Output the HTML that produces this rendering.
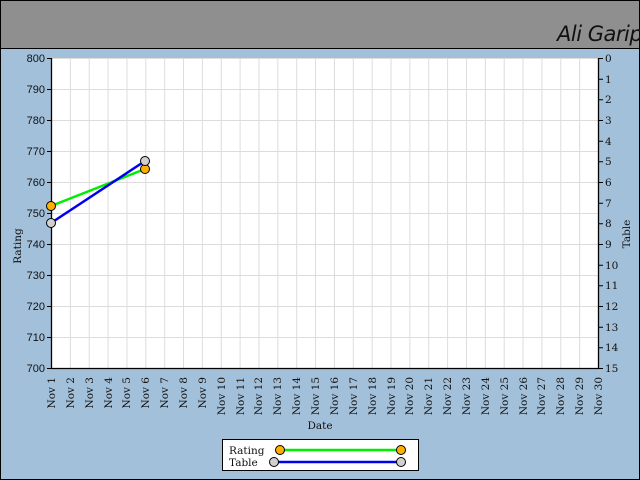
<!DOCTYPE html>
<html><head><meta charset="utf-8"><style>
html,body{margin:0;padding:0;width:640px;height:480px;overflow:hidden;background:#a3c0da}
svg{display:block}
.l{font-family:"Liberation Sans",sans-serif;font-size:11px;fill:#111}
.s{font-family:"DejaVu Serif","Liberation Serif",serif;font-size:10.5px;fill:#111}
</style></head><body>
<svg width="640" height="480" xmlns="http://www.w3.org/2000/svg">
<defs>
<pattern id="gv" x="51" y="0" width="18.862" height="10" patternUnits="userSpaceOnUse"><line x1="0.5" y1="0" x2="0.5" y2="10" stroke="#dcdcdc" stroke-width="1"/></pattern>
<pattern id="gh" x="0" y="58" width="10" height="31" patternUnits="userSpaceOnUse"><line x1="0" y1="0.5" x2="10" y2="0.5" stroke="#dcdcdc" stroke-width="1"/></pattern>
</defs>
<rect x="0.5" y="0.5" width="639" height="479" fill="#a3c0da" stroke="#000"/>
<rect x="0.5" y="0.5" width="639" height="48" fill="#8f8f8f" stroke="#000"/>
<text x="557" y="41" style="font-family:'DejaVu Sans',sans-serif;font-size:21px;font-style:italic;font-weight:200" fill="#111" letter-spacing="-0.5">Ali Garip</text>
<rect x="51" y="58" width="547" height="310" fill="#fff"/>
<rect x="51" y="58" width="547" height="310" fill="url(#gv)"/>
<rect x="51" y="58" width="547" height="310" fill="url(#gh)"/>
<path d="M51.5 58V368.5H598.5V58" fill="none" stroke="#000" stroke-width="1.3"/>
<g stroke="#000">
<path d="M47 58.5h4M47 89.5h4M47 120.5h4M47 151.5h4M47 182.5h4M47 213.5h4M47 244.5h4M47 275.5h4M47 306.5h4M47 337.5h4M47 368.5h4"/>
<path d="M598 58.5h5M598 79.2h5M598 99.8h5M598 120.5h5M598 141.2h5M598 161.8h5M598 182.5h5M598 203.2h5M598 223.8h5M598 244.5h5M598 265.2h5M598 285.8h5M598 306.5h5M598 327.2h5M598 347.8h5M598 368.5h5"/>
</g>
<g class="l" text-anchor="end">
<text x="45" y="62">800</text><text x="45" y="93">790</text><text x="45" y="124">780</text><text x="45" y="155">770</text><text x="45" y="186">760</text><text x="45" y="217">750</text><text x="45" y="248">740</text><text x="45" y="279">730</text><text x="45" y="310">720</text><text x="45" y="341">710</text><text x="45" y="372">700</text>
</g>
<g class="s">
<text x="605" y="62">0</text><text x="605" y="83">1</text><text x="605" y="103">2</text><text x="605" y="124">3</text><text x="605" y="145">4</text><text x="605" y="165">5</text><text x="605" y="186">6</text><text x="605" y="207">7</text><text x="605" y="227">8</text><text x="605" y="248">9</text><text x="605" y="269">10</text><text x="605" y="289">11</text><text x="605" y="310">12</text><text x="605" y="331">13</text><text x="605" y="351">14</text><text x="605" y="372">15</text>
</g>
<text class="s" transform="translate(21,246) rotate(-90)" text-anchor="middle">Rating</text>
<text class="s" transform="translate(630,234) rotate(-90)" text-anchor="middle">Table</text>
<text class="s" x="320" y="429" text-anchor="middle">Date</text>
<g class="s" text-anchor="end">
<text transform="translate(55,377) rotate(-90)">Nov 1</text>
<text transform="translate(74,377) rotate(-90)">Nov 2</text>
<text transform="translate(93,377) rotate(-90)">Nov 3</text>
<text transform="translate(112,377) rotate(-90)">Nov 4</text>
<text transform="translate(130,377) rotate(-90)">Nov 5</text>
<text transform="translate(149,377) rotate(-90)">Nov 6</text>
<text transform="translate(168,377) rotate(-90)">Nov 7</text>
<text transform="translate(187,377) rotate(-90)">Nov 8</text>
<text transform="translate(206,377) rotate(-90)">Nov 9</text>
<text transform="translate(225,377) rotate(-90)">Nov 10</text>
<text transform="translate(244,377) rotate(-90)">Nov 11</text>
<text transform="translate(262,377) rotate(-90)">Nov 12</text>
<text transform="translate(281,377) rotate(-90)">Nov 13</text>
<text transform="translate(300,377) rotate(-90)">Nov 14</text>
<text transform="translate(319,377) rotate(-90)">Nov 15</text>
<text transform="translate(338,377) rotate(-90)">Nov 16</text>
<text transform="translate(357,377) rotate(-90)">Nov 17</text>
<text transform="translate(376,377) rotate(-90)">Nov 18</text>
<text transform="translate(395,377) rotate(-90)">Nov 19</text>
<text transform="translate(413,377) rotate(-90)">Nov 20</text>
<text transform="translate(432,377) rotate(-90)">Nov 21</text>
<text transform="translate(451,377) rotate(-90)">Nov 22</text>
<text transform="translate(470,377) rotate(-90)">Nov 23</text>
<text transform="translate(489,377) rotate(-90)">Nov 24</text>
<text transform="translate(508,377) rotate(-90)">Nov 25</text>
<text transform="translate(527,377) rotate(-90)">Nov 26</text>
<text transform="translate(545,377) rotate(-90)">Nov 27</text>
<text transform="translate(564,377) rotate(-90)">Nov 28</text>
<text transform="translate(583,377) rotate(-90)">Nov 29</text>
<text transform="translate(602,377) rotate(-90)">Nov 30</text>
</g>
<line x1="51" y1="206" x2="145" y2="169" stroke="#00ee00" stroke-width="2.5"/>
<line x1="51" y1="223" x2="145" y2="161" stroke="#0000ee" stroke-width="2.5"/>
<circle cx="51" cy="206" r="4.5" fill="#ffb000" stroke="#000"/>
<circle cx="145" cy="169" r="4.5" fill="#ffb000" stroke="#000"/>
<circle cx="51" cy="223" r="4.5" fill="#d0d0d0" stroke="#000"/>
<circle cx="145" cy="161" r="4.5" fill="#d0d0d0" stroke="#000"/>
<rect x="222.5" y="439.5" width="196" height="31" fill="#fff" stroke="#000"/>
<text class="s" x="229" y="454">Rating</text>
<text class="s" x="229" y="466">Table</text>
<line x1="280" y1="450" x2="401" y2="450" stroke="#00ee00" stroke-width="2.5"/>
<line x1="274" y1="462" x2="401" y2="462" stroke="#0000ee" stroke-width="2.5"/>
<circle cx="280" cy="450" r="4.5" fill="#ffb000" stroke="#000"/>
<circle cx="401" cy="450" r="4.5" fill="#ffb000" stroke="#000"/>
<circle cx="274" cy="462" r="4.5" fill="#d0d0d0" stroke="#000"/>
<circle cx="401" cy="462" r="4.5" fill="#d0d0d0" stroke="#000"/>
</svg>
</body></html>
